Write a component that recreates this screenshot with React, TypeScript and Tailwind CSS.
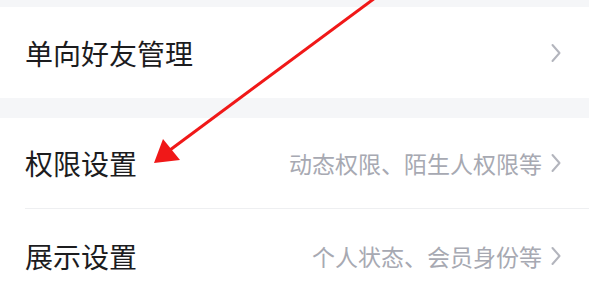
import React from "react";

const FONT = { fontFamily: '"Noto Sans CJK SC", "Noto Sans", sans-serif' };

function Chevron() {
  return (
    <svg width="10" height="20" viewBox="0 0 10 20" className="shrink-0" aria-hidden="true">
      <path d="M1.5 2 L8.5 10 L1.5 18" fill="none" stroke="#b3b5bd" strokeWidth="2" strokeLinecap="round" strokeLinejoin="round" />
    </svg>
  );
}

function Row({ title, hint, className }: { title: string; hint?: string; className: string }) {
  return (
    <div className={`flex items-center justify-between bg-white pl-[25px] pr-[28px] ${className}`}>
      <span className="text-[28px] leading-none text-[#1c1c1e]">{title}</span>
      <div className="flex items-center gap-[9px]">
        {hint && <span className="text-[23px] leading-none text-[#a7a9b2]">{hint}</span>}
        <Chevron />
      </div>
    </div>
  );
}

export default function App() {
  return (
    <div className="relative h-[287px] w-[600px] overflow-hidden bg-white" style={FONT}>
      <div className="flex w-[589px] flex-col bg-[#f5f6f8] pt-[7px]">
        <Row title="单向好友管理" className="h-[91px]" />
        <div className="h-[20px]" />
        <div className="bg-white">
          <Row title="权限设置" hint="动态权限、陌生人权限等" className="h-[90px]" />
          <div className="ml-[25px] h-px bg-[#eeeff1]" />
          <Row title="展示设置" hint="个人状态、会员身份等" className="h-[94px]" />
        </div>
      </div>

      <svg className="pointer-events-none absolute left-0 top-0" width="600" height="287" aria-hidden="true">
        <line x1="375" y1="-2" x2="170" y2="150" stroke="#f01818" strokeWidth="3" />
        <polygon points="154,163 163,139 180,160" fill="#f01818" />
      </svg>
    </div>
  );
}
